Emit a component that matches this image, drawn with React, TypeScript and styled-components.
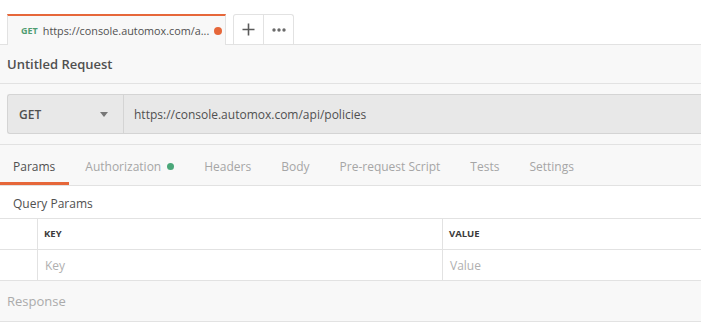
import styled, { createGlobalStyle } from "styled-components";

const GlobalStyle = createGlobalStyle`
  html, body {
    margin: 0;
    padding: 0;
    background: #ffffff;
    overflow: hidden;
  }
  body {
    font-family: "Open Sans", "DejaVu Sans", sans-serif;
    -webkit-font-smoothing: antialiased;
  }
`;

const Page = styled.div`
  width: 701px;
  display: flex;
  flex-direction: column;
  color: #505050;
`;

const TabStrip = styled.div`
  height: 44px;
  display: flex;
  align-items: flex-end;
  padding-left: 7px;
  border-bottom: 1px solid #e2e2e2;
  background: #ffffff;
`;

const RequestTab = styled.div`
  box-sizing: border-box;
  width: 219px;
  height: 31px;
  margin-bottom: -1px;
  display: flex;
  align-items: center;
  gap: 5px;
  padding: 0 7px 0 13px;
  background: #f8f8f8;
  border-top: 2px solid #e6673a;
  border-left: 1px solid #e2e2e2;
  border-right: 1px solid #e2e2e2;
`;

const MethodTag = styled.span`
  font-size: 9px;
  font-weight: 700;
  color: #4f9d72;
`;

const TabUrl = styled.span`
  flex: 1;
  font-size: 10.8px;
  color: #505050;
  white-space: nowrap;
`;

const Dot = styled.span<{ $color: string; $size: number }>`
  width: ${(p) => p.$size}px;
  height: ${(p) => p.$size}px;
  border-radius: 50%;
  background: ${(p) => p.$color};
  flex-shrink: 0;
`;

const StripButtons = styled.div`
  display: flex;
  margin-left: 7px;
  height: 30px;
  border: 1px solid #e2e2e2;
  border-bottom: none;
  border-radius: 3px 3px 0 0;
  box-sizing: border-box;
`;

const StripButton = styled.div<{ $divider?: boolean }>`
  width: 29px;
  display: flex;
  align-items: center;
  justify-content: center;
  color: #6b6b6b;
  border-left: ${(p) => (p.$divider ? "1px solid #e2e2e2" : "none")};
`;

const RequestTitle = styled.div`
  height: 38px;
  display: flex;
  align-items: center;
  padding-left: 7px;
  background: #f8f8f8;
  border-bottom: 1px solid #e2e2e2;
  font-size: 13px;
  font-weight: 600;
  color: #505050;
`;

const UrlSection = styled.div`
  padding: 10px 0 10px 7px;
  background: #f8f8f8;
  border-bottom: 1px solid #e2e2e2;
`;

const UrlBar = styled.div`
  height: 40px;
  box-sizing: border-box;
  display: flex;
  background: #e8e8e8;
  border: 1px solid #d4d4d4;
  border-right: none;
  border-radius: 3px 0 0 3px;
`;

const MethodSelect = styled.div`
  width: 116px;
  box-sizing: border-box;
  display: flex;
  align-items: center;
  justify-content: space-between;
  padding: 0 15px 0 11px;
  border-right: 1px solid #d4d4d4;
  font-size: 12px;
  font-weight: 600;
  color: #505050;
`;

const Caret = styled.span`
  width: 0;
  height: 0;
  border-left: 4px solid transparent;
  border-right: 4px solid transparent;
  border-top: 5px solid #777777;
`;

const UrlInput = styled.div`
  display: flex;
  align-items: center;
  padding-left: 10px;
  font-size: 12px;
  color: #505050;
  white-space: nowrap;
`;

const SectionTabs = styled.div`
  height: 40px;
  display: flex;
  background: #f8f8f8;
  border-bottom: 1px solid #e2e2e2;
`;

const SectionTab = styled.div<{ $active?: boolean }>`
  box-sizing: border-box;
  display: flex;
  align-items: center;
  gap: 6px;
  padding: 6px 14px 0 13px;
  margin-right: 3px;
  font-size: 12px;
  color: ${(p) => (p.$active ? "#505050" : "#a6a6a6")};
  border-bottom: 3px solid ${(p) => (p.$active ? "#e6673a" : "transparent")};
`;

const SubHeading = styled.div`
  height: 30px;
  display: flex;
  align-items: center;
  padding: 2px 0 0 13px;
  font-size: 12px;
  color: #505050;
  background: #ffffff;
  border-bottom: 1px solid #e2e2e2;
`;

const ParamRow = styled.div`
  height: 30px;
  display: grid;
  grid-template-columns: 37px 405px 1fr;
  border-bottom: 1px solid #e2e2e2;
  background: #ffffff;
`;

const Cell = styled.div<{ $header?: boolean }>`
  display: flex;
  align-items: center;
  padding-left: ${(p) => (p.$header ? "6px" : "7px")};
  padding-bottom: ${(p) => (p.$header ? "2px" : "0")};
  border-left: 1px solid #e2e2e2;
  font-size: ${(p) => (p.$header ? "9.5px" : "12px")};
  font-weight: ${(p) => (p.$header ? 700 : 400)};
  color: ${(p) => (p.$header ? "#3a3a3a" : "#b0b0b0")};

  &:first-child {
    border-left: none;
  }
`;

const ResponseBar = styled.div`
  height: 40px;
  display: flex;
  align-items: center;
  padding-left: 7px;
  background: #f8f8f8;
  border-bottom: 1px solid #e2e2e2;
  font-size: 13px;
  color: #ababab;
`;

const sectionTabs = [
  { name: "Params", active: true },
  { name: "Authorization", dot: true },
  { name: "Headers" },
  { name: "Body" },
  { name: "Pre-request Script" },
  { name: "Tests" },
  { name: "Settings" },
];

const App = () => {
  return (
    <Page>
      <GlobalStyle />
      <TabStrip>
        <RequestTab>
          <MethodTag>GET</MethodTag>
          <TabUrl>https://console.automox.com/a...</TabUrl>
          <Dot $color="#e6673a" $size={8} />
        </RequestTab>
        <StripButtons>
          <StripButton>
            <svg width="13" height="13" viewBox="0 0 13 13">
              <path d="M6.5 0.5v12M0.5 6.5h12" stroke="#5a5a5a" strokeWidth="1.6" />
            </svg>
          </StripButton>
          <StripButton $divider>
            <svg width="14" height="4" viewBox="0 0 14 4">
              <circle cx="2" cy="2" r="1.7" fill="#6b6b6b" />
              <circle cx="7" cy="2" r="1.7" fill="#6b6b6b" />
              <circle cx="12" cy="2" r="1.7" fill="#6b6b6b" />
            </svg>
          </StripButton>
        </StripButtons>
      </TabStrip>

      <RequestTitle>Untitled Request</RequestTitle>

      <UrlSection>
        <UrlBar>
          <MethodSelect>
            GET
            <Caret />
          </MethodSelect>
          <UrlInput>https://console.automox.com/api/policies</UrlInput>
        </UrlBar>
      </UrlSection>

      <SectionTabs>
        {sectionTabs.map((tab) => (
          <SectionTab key={tab.name} $active={tab.active}>
            {tab.name}
            {tab.dot && <Dot $color="#4aa779" $size={7} />}
          </SectionTab>
        ))}
      </SectionTabs>

      <SubHeading>Query Params</SubHeading>
      <ParamRow>
        <Cell />
        <Cell $header>KEY</Cell>
        <Cell $header>VALUE</Cell>
      </ParamRow>
      <ParamRow>
        <Cell />
        <Cell>Key</Cell>
        <Cell>Value</Cell>
      </ParamRow>

      <ResponseBar>Response</ResponseBar>
    </Page>
  );
};

export default App;
